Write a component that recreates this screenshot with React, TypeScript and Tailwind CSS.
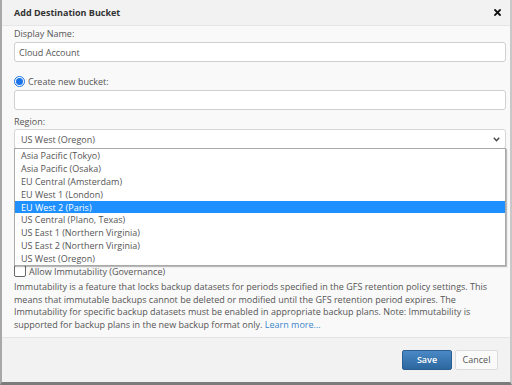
import React from "react";

const items = [
  "Asia Pacific (Tokyo)",
  "Asia Pacific (Osaka)",
  "EU Central (Amsterdam)",
  "EU West 1 (London)",
  "EU West 2 (Paris)",
  "US Central (Plano, Texas)",
  "US East 1 (Northern Virginia)",
  "US East 2 (Northern Virginia)",
  "US West (Oregon)",
];

export default function App() {
  return (
    <div
      className="w-[512px] h-[385px] flex flex-col bg-[#f9f9f9] border-l-2 border-l-[#a8a8a8] border-r-2 border-r-[#c8c8c8] border-b-[3px] border-b-[#7b7b7b] text-[#555] overflow-hidden"
      style={{ fontFamily: '"Open Sans", "Liberation Sans", sans-serif' }}
    >
      {/* Header */}
      <div className="h-[26px] shrink-0 flex items-center justify-between bg-[#f2f2f2] border-b border-[#e6e6e6] pl-[12px] pr-[9px]">
        <span className="text-[9px] font-bold text-[#333]">Add Destination Bucket</span>
        <svg width="7" height="7" viewBox="0 0 7 7">
          <path d="M1 1 L6 6 M6 1 L1 6" stroke="#111" strokeWidth="1.8" strokeLinecap="square" />
        </svg>
      </div>

      {/* Body */}
      <div className="flex-1 flex flex-col pl-[12px] pr-[4px] text-[9px] leading-[13px]">
        <div className="mt-[1px] h-[13px] flex items-center">Display Name:</div>
        <div className="mt-[2px] h-[20px] bg-white border border-[#d0d0d0] rounded-[3px] flex items-center pl-[4px] text-[#555]">
          Cloud Account
        </div>

        <div className="mt-[12px] h-[14px] flex items-center gap-[3px]">
          <span className="w-[11px] h-[11px] rounded-full border border-[#1a73e8] bg-white flex items-center justify-center">
            <span className="w-[7px] h-[7px] rounded-full bg-[#1a73e8]" />
          </span>
          <span>Create new bucket:</span>
        </div>
        <div className="mt-[2px] h-[20px] bg-white border border-[#d0d0d0] rounded-[3px]" />

        <div className="mt-[5px] h-[13px] flex items-center">Region:</div>
        <div className="relative mt-[1px]">
          <div className="h-[20px] bg-white border border-[#d6d6d6] rounded-[3px] flex items-center justify-between pl-[6px] pr-[5px] shadow-[0_1px_1px_rgba(0,0,0,0.08)]">
            <span>US West (Oregon)</span>
            <svg width="7" height="5" viewBox="0 0 7 5">
              <path d="M0.8 0.8 L3.5 3.8 L6.2 0.8" stroke="#444" strokeWidth="1.4" fill="none" />
            </svg>
          </div>
          <div className="absolute left-0 right-0 top-[19px] z-10 bg-white border border-[#a9a9a9] shadow-[1px_1px_1px_rgba(0,0,0,0.25)] py-[0.5px]">
            {items.map((it) => (
              <div
                key={it}
                className={
                  it === "EU West 2 (Paris)"
                    ? "h-[12.8px] flex items-center pl-[6px] bg-[#1e90ff] text-white"
                    : "h-[12.8px] flex items-center pl-[6px] text-[#555]"
                }
              >
                {it}
              </div>
            ))}
          </div>
        </div>

        <div className="h-[115px] shrink-0" />

        <div className="h-[14px] flex items-center gap-[3px]">
          <span className="w-[12px] h-[12px] rounded-[2px] border border-[#666] bg-white" />
          <span>Allow Immutability (Governance)</span>
        </div>
        <p className="mt-[3px] leading-[12.7px] pr-[6px]">
          Immutability is a feature that locks backup datasets for periods specified in the GFS retention policy settings. This
          means that immutable backups cannot be deleted or modified until the GFS retention period expires. The
          Immutability for specific backup datasets must be enabled in appropriate backup plans. Note: Immutability is
          supported for backup plans in the new backup format only. <span className="text-[#3a87c9]">Learn more...</span>
        </p>
      </div>

      {/* Footer */}
      <div className="h-[45px] shrink-0 bg-[#f2f2f2] border-t border-[#e4e4e4] flex items-center justify-end gap-[3px] pr-[12px] text-[9px]">
        <button className="w-[50px] h-[20px] rounded-[2px] border border-[#2b5f91] bg-gradient-to-b from-[#4a89c6] to-[#2c679f] text-white font-semibold">
          Save
        </button>
        <button className="w-[43px] h-[20px] rounded-[2px] border border-[#dcdcdc] bg-[#fafafa] text-[#555]">
          Cancel
        </button>
      </div>
    </div>
  );
}
